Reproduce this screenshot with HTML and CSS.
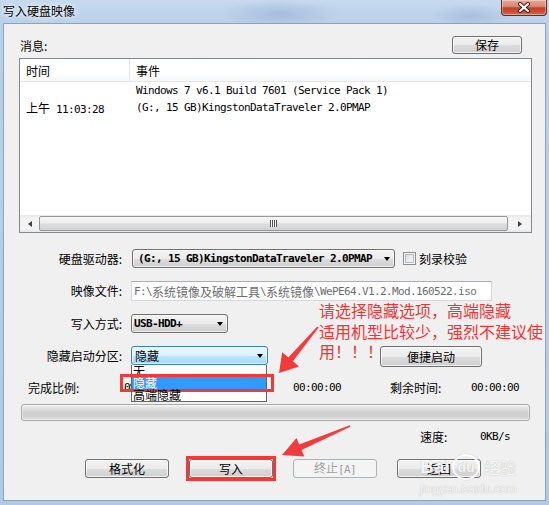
FILE: index.html
```html
<!DOCTYPE html>
<html lang="zh-CN">
<head>
<meta charset="utf-8">
<title>写入硬盘映像</title>
<link rel="stylesheet" href="styles.css">
</head>
<body>
<div class="window">
  <div class="titlebar">
    <span class="title">写入硬盘映像</span>
    <span class="close">
      <svg width="14" height="11" viewBox="0 0 14 11"><path d="M3 2 L11 9 M11 2 L3 9" stroke="#3b1a14" stroke-width="4" stroke-linecap="round"/><path d="M3 2 L11 9 M11 2 L3 9" stroke="#fff" stroke-width="2.2" stroke-linecap="round"/></svg>
    </span>
  </div>
  <div class="client">
    <div class="msg-row">
      <span>消息:</span>
      <button class="btn save">保存</button>
    </div>
    <div class="list">
      <div class="list-head"><span class="col-time">时间</span><span class="col-event">事件</span></div>
      <div class="list-body">
        <div class="list-row"><span class="col-time"></span><span class="col-event mono">Windows 7 v6.1 Build 7601 (Service Pack 1)</span></div>
        <div class="list-row"><span class="col-time">上午<span class="mono"> 11:03:28</span></span><span class="col-event mono">(G:, 15 GB)KingstonDataTraveler 2.0PMAP</span></div>
      </div>
      <div class="hscroll">
        <span class="sb-btn"><span class="tri-left"></span></span>
        <span class="sb-thumb"><span class="grip"></span></span>
        <span class="sb-btn right"><span class="tri-right"></span></span>
      </div>
    </div>
    <div class="fields">
      <span class="f-label">硬盘驱动器:</span>
      <div class="f-ctrl">
        <div class="combo drive"><span class="mono b">(G:, 15 GB)KingstonDataTraveler 2.0PMAP</span><span class="drop"></span></div>
        <span class="check"></span><span class="check-label">刻录校验</span>
      </div>
      <span class="f-label">映像文件:</span>
      <div class="f-ctrl">
        <div class="path mono"><span>F:\</span><span class="cj">系统镜像及破解工具</span><span>\</span><span class="cj">系统镜像</span><span>\WePE64.V1.2.Mod.160522.iso</span></div>
      </div>
      <span class="f-label">写入方式:</span>
      <div class="f-ctrl">
        <div class="combo mode"><span class="mono b">USB-HDD+</span><span class="drop"></span></div>
      </div>
      <span class="f-label">隐藏启动分区:</span>
      <div class="f-ctrl top">
        <div class="combo hide"><span>隐藏</span><span class="drop"></span>
          <div class="dropdown">
            <div class="opt">无</div>
            <div class="opt sel">隐藏</div>
            <div class="opt">高端隐藏</div>
          </div>
        </div>
        <button class="btn quick">便捷启动</button>
      </div>
    </div>
    <div class="stats">
      <span class="st1">完成比例:</span>
      <span class="st2 mono">0%</span>
      <span class="st3 mono">00:00:00</span>
      <span class="st4">剩余时间:</span>
      <span class="mono">00:00:00</span>
    </div>
    <div class="progress"></div>
    <div class="speed">
      <span class="sp1">速度:</span>
      <span class="mono">0KB/s</span>
    </div>
    <div class="actions">
      <button class="btn act">格式化</button>
      <button class="btn act marked">写入</button>
      <button class="btn act" disabled>终止<span class="mono">[A]</span></button>
      <button class="btn act">返回</button>
    </div>
  </div>

  <div class="note">请选择隐藏选项，高端隐藏<br>适用机型比较少，强烈不建议使用！！！</div>

  <svg class="arrows" width="549" height="505" viewBox="0 0 549 505">
    <polygon points="317.3,326.4 288.3,357.4 282.2,352.2 279,373 299,366.4 292.9,361.2 318.7,327.6" fill="#f43b3b"/>
    <polygon points="349.7,425.3 299.2,444.4 296.5,438 282,455 304.3,456.4 301.6,450 350.3,426.7" fill="#f43b3b"/>
  </svg>

  <div class="wm">
    <div class="wm-top"><span class="wm-bai">Bai</span><span class="wm-du">du</span><span class="wm-jy">经验</span></div>
    <div class="wm-url">jingyan.baidu.com</div>
  </div>
</div>
</body>
</html>
```

FILE: styles.css
```css
html, body {
  margin: 0;
  padding: 0;
  background: #fff;
}

.window {
  position: relative;
  width: 549px;
  height: 505px;
  display: flex;
  flex-direction: column;
  overflow: hidden;
  font-family: "Noto Sans CJK SC", sans-serif;
  font-size: 12px;
  color: #000;
  background:
    radial-gradient(ellipse 60px 14px at 280px 14px, rgba(120,150,190,.35), rgba(120,150,190,0)),
    radial-gradient(ellipse 40px 12px at 470px 16px, rgba(120,150,190,.3), rgba(120,150,190,0)),
    linear-gradient(180deg, #c6d9ee 0, #bad0e9 23px, #b0c9e5 100%);
}

.titlebar {
  flex: none;
  height: 23px;
  display: flex;
  align-items: flex-start;
}

.title {
  padding-left: 3px;
  line-height: 22px;
  text-shadow: 0 0 4px #fff, 0 0 8px rgba(255,255,255,.9);
}

.close {
  margin-left: auto;
  margin-right: 2px;
  width: 46px;
  height: 16px;
  box-sizing: border-box;
  border: 1px solid #6d2a20;
  border-top: 0;
  border-radius: 0 0 4px 4px;
  background: linear-gradient(180deg, #e8a899 0%, #d7846f 45%, #c23f26 52%, #c9553c 85%, #d97a5f 100%);
  box-shadow: inset 0 0 0 1px rgba(255,255,255,.35);
  display: flex;
  align-items: center;
  justify-content: center;
}

.client {
  flex: 1;
  margin: 0 3px 4px 3px;
  border: 1px solid #8ca3bf;
  background: #f0f0f0;
  display: flex;
  flex-direction: column;
}

.mono {
  font-family: "DejaVu Sans Mono", monospace;
  font-size: 11px;
  letter-spacing: -0.62px;
}

.mono .cj {
  font-family: "Noto Sans CJK SC", sans-serif;
  font-size: 12px;
  letter-spacing: 0;
}

.b {
  font-weight: bold;
}

.btn {
  position: relative;
  box-sizing: border-box;
  padding: 0;
  font-family: "Noto Sans CJK SC", sans-serif;
  font-size: 12px;
  line-height: 1;
  color: #000;
  border: 1px solid #707070;
  border-radius: 3px;
  background: linear-gradient(180deg, #f2f2f2 0%, #ebebeb 50%, #dddddd 51%, #cfcfcf 100%);
  box-shadow: inset 0 0 0 1px rgba(255,255,255,.7);
}

.btn:disabled {
  color: #a0a0a0;
  border-color: #adb2b5;
  background: #f4f4f4;
  box-shadow: none;
}

.msg-row {
  margin-top: 12px;
  height: 18px;
  display: flex;
  align-items: center;
  justify-content: space-between;
  padding: 0 23px 0 16px;
}

.save {
  width: 70px;
  height: 18px;
}

.list {
  margin: 4px 0 0 15px;
  width: 513px;
  height: 175px;
  box-sizing: border-box;
  border: 1px solid #828790;
  background: #fff;
  display: flex;
  flex-direction: column;
}

.list-head {
  flex: none;
  height: 23px;
  box-sizing: border-box;
  border-bottom: 1px solid #e5e5e5;
  display: flex;
  align-items: stretch;
  background: linear-gradient(180deg, #fff 0%, #fff 60%, #f7f8fa 100%);
}

.list-head span {
  display: flex;
  align-items: center;
}

.col-time {
  flex: none;
  width: 110px;
  box-sizing: border-box;
  padding-left: 6px;
}

.list-head .col-time {
  border-right: 1px solid #e5e5e5;
}

.col-event {
  padding-left: 6px;
  white-space: nowrap;
}

.list-body {
  flex: 1;
}

.list-row {
  height: 17px;
  display: flex;
  align-items: center;
}

.hscroll {
  flex: none;
  height: 17px;
  display: flex;
  background: linear-gradient(180deg, #e7e7e7 0%, #f3f3f3 18%, #f3f3f3 82%, #e7e7e7 100%);
}

.sb-btn {
  width: 19px;
  display: flex;
  align-items: center;
  justify-content: center;
}

.sb-btn.right {
  flex: 1;
}

.tri-left {
  width: 0;
  height: 0;
  border-top: 3.5px solid transparent;
  border-bottom: 3.5px solid transparent;
  border-right: 4px solid #404040;
}

.tri-right {
  width: 0;
  height: 0;
  border-top: 3.5px solid transparent;
  border-bottom: 3.5px solid transparent;
  border-left: 4px solid #404040;
}

.sb-thumb {
  width: 469px;
  margin: 1px 0;
  box-sizing: border-box;
  border: 1px solid #979797;
  border-radius: 2px;
  background: linear-gradient(180deg, #f7f7f7 0%, #ececec 45%, #dcdcdc 55%, #d4d4d4 100%);
  display: flex;
  align-items: center;
  justify-content: center;
}

.grip {
  width: 7px;
  height: 7px;
  background: repeating-linear-gradient(90deg, #505050 0 1px, #fdfdfd 1px 2px);
}

.fields {
  margin-top: 16px;
  display: grid;
  grid-template-columns: 118px auto;
  grid-template-rows: 19px 20px 19px 21px;
  column-gap: 9px;
  row-gap: 13px;
}

.f-label {
  justify-self: end;
  align-self: start;
  line-height: 19px;
}

.f-ctrl {
  display: flex;
  align-items: center;
}

.f-ctrl.top {
  align-items: flex-start;
}

.combo {
  position: relative;
  box-sizing: border-box;
  height: 19px;
  border: 1px solid #707070;
  border-radius: 3px;
  background: linear-gradient(180deg, #f2f2f2 0%, #ebebeb 50%, #dddddd 51%, #cfcfcf 100%);
  box-shadow: inset 0 0 0 1px rgba(255,255,255,.6);
  display: flex;
  align-items: center;
  justify-content: space-between;
  padding: 0 4px 0 5px;
  white-space: nowrap;
}

.drive {
  width: 263px;
  margin-left: 1px;
}

.mode {
  width: 97px;
  padding-left: 2px;
}

.hide {
  width: 137px;
  padding-left: 3px;
  border-color: #3c7fb1;
  background: linear-gradient(180deg, #eaf6fd 0%, #d9f0fc 50%, #bee6fd 51%, #a7d9f5 100%);
}

.drop {
  width: 0;
  height: 0;
  border-left: 3.5px solid transparent;
  border-right: 3.5px solid transparent;
  border-top: 4px solid #000;
}

.check {
  width: 13px;
  height: 13px;
  box-sizing: border-box;
  margin-left: 8px;
  border: 1px solid #8f8f8f;
  background: linear-gradient(135deg, #d2d2d2 0%, #eeeeee 60%, #fbfbfb 100%);
  box-shadow: inset 0 0 0 1px #f6f6f6, inset 0 0 0 2px #b8bcc1;
}

.check-label {
  margin-left: 3px;
}

.path {
  width: 361px;
  height: 20px;
  box-sizing: border-box;
  border: 1px solid #d5d8dd;
  border-top-color: #abadb3;
  background: #fff;
  color: #6d6d6d;
  padding-left: 2px;
  display: flex;
  align-items: center;
  white-space: nowrap;
  overflow: hidden;
}

.quick {
  width: 102px;
  height: 21px;
  margin-left: 112px;
}

.dropdown {
  position: absolute;
  top: 18px;
  left: -1px;
  width: 136px;
  box-sizing: border-box;
  border: 1px solid #646464;
  border-top: 0;
  background: #fff;
  z-index: 2;
}

.opt {
  position: relative;
  height: 12px;
  line-height: 12px;
  padding-left: 1px;
  overflow: visible;
}

.opt.sel {
  background: #3399ff;
  color: #fff;
}

.opt.sel::after {
  content: "";
  position: absolute;
  top: -3px;
  bottom: -3px;
  left: -12px;
  right: -8px;
  border: 3px solid #f03a3a;
}

.stats {
  margin-top: 13px;
  height: 16px;
  line-height: 16px;
  padding-left: 24px;
  display: flex;
  white-space: nowrap;
}

.st1 { width: 96px; }
.st2 { width: 169px; }
.st3 { width: 97px; }
.st4 { width: 81px; }

.progress {
  margin: 8px 0 0 17px;
  width: 509px;
  height: 17px;
  box-sizing: border-box;
  border: 1px solid #a9a9a9;
  border-radius: 3px;
  background: linear-gradient(180deg, #f2f2f2 0%, #dedede 25%, #cdcdcd 55%, #d3d3d3 80%, #e2e2e2 100%);
  box-shadow: inset 0 0 0 1px rgba(255,255,255,.45);
}

.speed {
  margin-top: 8px;
  height: 16px;
  line-height: 16px;
  padding-left: 416px;
  display: flex;
}

.sp1 { width: 60px; }

.actions {
  margin-top: 14px;
  padding-left: 81px;
  display: flex;
  gap: 20px;
}

.act {
  width: 84px;
  height: 19px;
}

.marked::after {
  content: "";
  position: absolute;
  top: -4px;
  bottom: -4px;
  left: -4px;
  right: -4px;
  border: 3px solid #f03a3a;
}

.note {
  position: absolute;
  left: 319px;
  top: 300px;
  width: 228px;
  font-size: 16px;
  line-height: 20.5px;
  color: #f43232;
}

.arrows {
  position: absolute;
  left: 0;
  top: 0;
  pointer-events: none;
}

.wm {
  position: absolute;
  left: 420px;
  top: 452px;
  width: 100px;
  color: rgba(255,255,255,.9);
  text-shadow: 0 0 1px rgba(110,110,110,.55);
  pointer-events: none;
}

.wm-top {
  display: flex;
  align-items: center;
  height: 30px;
}

.wm-bai {
  font-family: "Liberation Sans", sans-serif;
  font-weight: bold;
  font-size: 19px;
  width: 32px;
}

.wm-du {
  width: 24px;
  height: 22px;
  border-radius: 50%;
  border: 2px solid rgba(255,255,255,.9);
  box-shadow: 0 0 1px rgba(110,110,110,.55);
  font-family: "Liberation Sans", sans-serif;
  font-weight: bold;
  font-size: 14px;
  line-height: 22px;
  text-align: center;
}

.wm-jy {
  margin-left: 4px;
  font-size: 16px;
}

.wm-url {
  font-family: "Liberation Sans", sans-serif;
  font-size: 12px;
  line-height: 14px;
}
```
